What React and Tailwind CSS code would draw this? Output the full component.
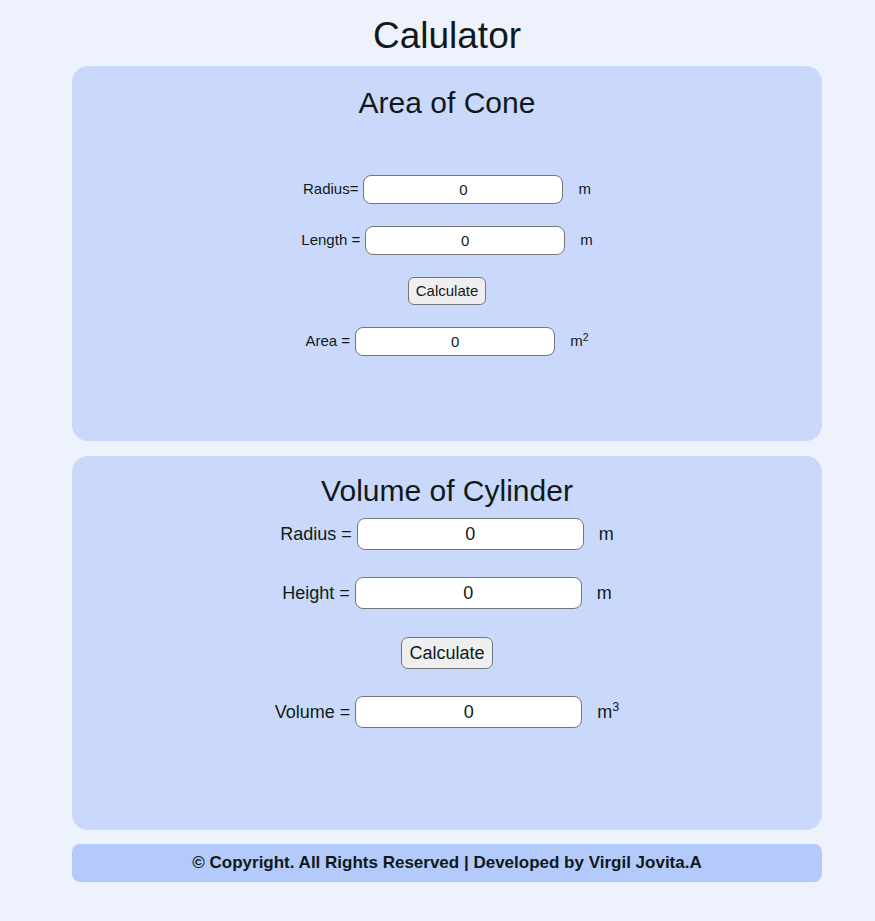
import React, { useState } from 'react';

function Row({ label, value, onChange, unit, sup, small }) {
  const inputCls = small
    ? 'w-[200px] h-[29px] text-[15px]'
    : 'w-[227px] h-[32px] text-[18px]';
  return (
    <div className={`flex items-center justify-center ${small ? 'h-[29px]' : 'h-[32px]'}`}>
      <span className="mr-[5px] whitespace-pre">{label}</span>
      <input
        type="text"
        value={value}
        onChange={onChange}
        className={`${inputCls} bg-white border border-[#767676] rounded-[8px] text-center outline-none`}
      />
      <span className="ml-[15px]">
        {unit}
        {sup && <sup className="text-[0.7em]">{sup}</sup>}
      </span>
    </div>
  );
}

export default function App() {
  const [r1, setR1] = useState('0');
  const [l1, setL1] = useState('0');
  const [area, setArea] = useState('0');
  const [r2, setR2] = useState('0');
  const [h2, setH2] = useState('0');
  const [vol, setVol] = useState('0');

  const calcArea = () => {
    const r = parseFloat(r1) || 0;
    const l = parseFloat(l1) || 0;
    setArea(String(+(Math.PI * r * (r + l)).toFixed(2)));
  };

  const calcVol = () => {
    const r = parseFloat(r2) || 0;
    const h = parseFloat(h2) || 0;
    setVol(String(+(Math.PI * r * r * h).toFixed(2)));
  };

  return (
    <div className="min-h-[921px] bg-[#eef2fc] text-[#10191a] font-['Liberation_Sans',Arial,sans-serif]">
      <div className="w-[750px] ml-[72px] pt-[15px]">
        <h1 className="text-center text-[37px] leading-[42px] mb-[9px]">Calulator</h1>

        <div className="h-[375px] bg-[#cad9fb] rounded-[16px] pt-[20px] text-[15px]">
          <h2 className="text-center text-[30px] leading-[34px] mb-[55px]">Area of Cone</h2>
          <div className="flex flex-col gap-[22px]">
            <Row small label="Radius=" value={r1} onChange={(e) => setR1(e.target.value)} unit="m" />
            <Row small label="Length =" value={l1} onChange={(e) => setL1(e.target.value)} unit="m" />
            <div className="flex justify-center h-[28px]">
              <button
                onClick={calcArea}
                className="h-[28px] px-[7px] bg-[#efefef] border border-[#767676] rounded-[6px] text-[15px]"
              >
                Calculate
              </button>
            </div>
            <Row small label="Area =" value={area} readOnly unit="m" sup="2" />
          </div>
        </div>

        <div className="h-[374px] mt-[15px] bg-[#cad9fb] rounded-[16px] pt-[18px] text-[18px]">
          <h2 className="text-center text-[30px] leading-[34px] mb-[10px]">Volume of Cylinder</h2>
          <div className="flex flex-col gap-[27px]">
            <Row label="Radius =" value={r2} onChange={(e) => setR2(e.target.value)} unit="m" />
            <Row label="Height =" value={h2} onChange={(e) => setH2(e.target.value)} unit="m" />
            <div className="flex justify-center items-end h-[33px]">
              <button
                onClick={calcVol}
                className="h-[32px] px-[7px] bg-[#efefef] border border-[#767676] rounded-[7px] text-[18px]"
              >
                Calculate
              </button>
            </div>
            <Row label="Volume =" value={vol} readOnly unit="m" sup="3" />
          </div>
        </div>

        <footer className="mt-[14px] h-[38px] bg-[#b4cafb] rounded-[8px] flex items-center justify-center font-bold text-[17px]">
          © Copyright. All Rights Reserved | Developed by Virgil Jovita.A
        </footer>
      </div>
    </div>
  );
}
